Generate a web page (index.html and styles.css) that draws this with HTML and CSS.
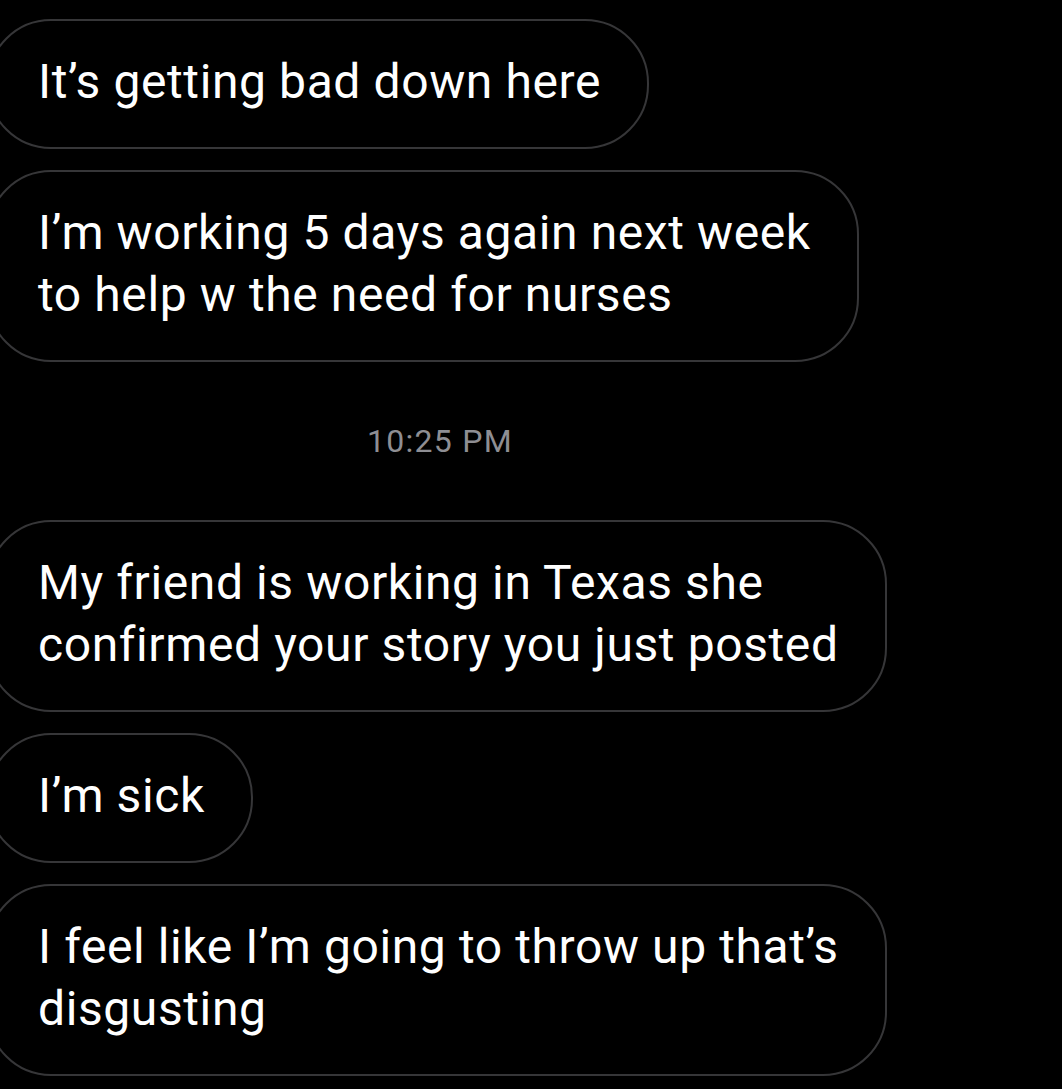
FILE: index.html
```html
<!DOCTYPE html>
<html>
<head>
<meta charset="utf-8">
<link rel="stylesheet" href="styles.css">
</head>
<body>
<div class="thread">
  <div class="bubble">It’s getting bad down here</div>
  <div class="bubble">I’m working 5 days again next week<br>to help w the need for nurses</div>
  <div class="stamp">10:25 PM</div>
  <div class="bubble">My friend is working in Texas she<br>confirmed your story you just posted</div>
  <div class="bubble">I’m sick</div>
  <div class="bubble">I feel like I’m going to throw up that’s<br>disgusting</div>
</div>
</body>
</html>
```
FILE: styles.css
```css
html, body {
  margin: 0;
  padding: 0;
  background: #000;
}
.thread {
  display: flex;
  flex-direction: column;
  align-items: flex-start;
  gap: 21px;
  padding-top: 19px;
  font-family: Roboto, "Liberation Sans", sans-serif;
  color: #fff;
  overflow: hidden;
  height: 1089px;
  box-sizing: border-box;
}
.bubble {
  margin-left: -13px;
  border: 2px solid #363638;
  border-radius: 64px;
  padding: 30px 46px 34px 49px;
  font-size: 48px;
  line-height: 62px;
  letter-spacing: 0.6px;
  white-space: nowrap;
}
.stamp {
  align-self: stretch;
  width: 880px;
  text-align: center;
  font-size: 32px;
  line-height: 36px;
  letter-spacing: 1.3px;
  color: #8e8e93;
  margin: 40px 0 40px;
}
```
